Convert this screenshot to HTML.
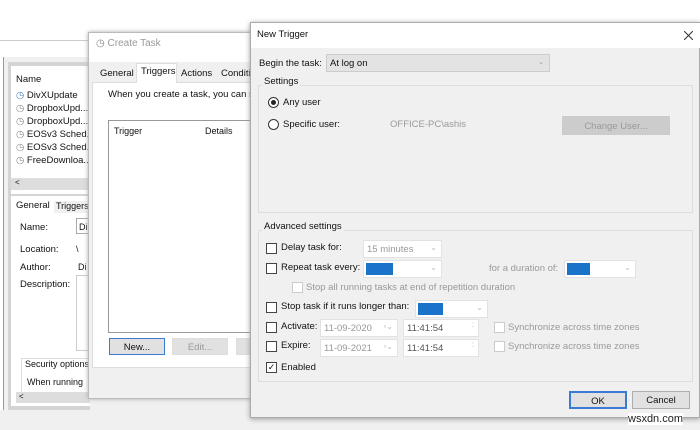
<!DOCTYPE html>
<html><head><meta charset="utf-8"><style>
*{box-sizing:border-box;margin:0;padding:0}
body{width:700px;height:430px;overflow:hidden;background:#f0f0f0;font-family:"Liberation Sans",sans-serif;font-size:9px;color:#111;position:relative}
.a{position:absolute;white-space:nowrap}
.cb{position:absolute;width:11px;height:11px;border:1px solid #444;background:#fff}
.cbd{position:absolute;width:11px;height:11px;border:1px solid #ccc;background:#fff}
.g{color:#999}
.combo{position:absolute;background:#fff;border:1px solid #e2e2e2}
.combo i{position:absolute;right:4px;top:2px;font-style:normal;color:#bbb;font-size:8px}
.blue{position:absolute;background:#1a73c8;top:2px;bottom:2px;left:2px}
.btn{position:absolute;background:#e1e1e1;border:1px solid #adadad;text-align:center;font-size:9.5px}
</style></head><body>
<div class="a" style="left:0;top:0;width:700px;height:41px;background:#fff;border-bottom:1px solid #ccc"></div>
<div class="a" style="left:0;top:41px;width:700px;height:16px;background:#fff"></div>
<div class="a" style="left:0;top:57px;width:4px;height:353px;border-right:1px solid #999;background:#fff"></div>
<div class="a" style="left:8px;top:62px;width:82px;height:348px;background:#d4d4d4"></div>
<div class="a" style="left:11px;top:66px;width:79px;height:128px;background:#fff"></div>
<div class="a" style="left:16px;top:74px;font-size:9.5px">Name</div>
<div class="a" style="left:16px;top:89px;line-height:13px;font-size:9.5px">
<div><span style="color:#4a7fc0">◷</span> DivXUpdate</div>
<div><span style="color:#888">◷</span> DropboxUpd...</div>
<div><span style="color:#888">◷</span> DropboxUpd...</div>
<div><span style="color:#888">◷</span> EOSv3 Sched...</div>
<div><span style="color:#888">◷</span> EOSv3 Sched...</div>
<div><span style="color:#888">◷</span> FreeDownloa...</div></div>
<div class="a" style="left:11px;top:178px;width:79px;height:12px;background:#ddd;font-size:8px;padding-left:4px">&lt;</div>
<div class="a" style="left:11px;top:196px;width:79px;height:210px;background:#fff"></div>
<div class="a" style="left:16px;top:200px;font-size:9.5px">General</div>
<div class="a" style="left:54px;top:201px;width:36px;height:12px;background:#f0f0f0;padding-left:2px">Triggers</div>
<div class="a" style="left:20px;top:222px;font-size:9.5px">Name:</div>
<div class="a" style="left:76px;top:218px;width:14px;height:16px;border:1px solid #aaa;padding:3px 2px">Di</div>
<div class="a" style="left:20px;top:244px;font-size:9.5px">Location:</div><div class="a" style="left:76px;top:244px">\</div>
<div class="a" style="left:20px;top:262px;font-size:9.5px">Author:</div><div class="a" style="left:78px;top:262px">Di</div>
<div class="a" style="left:20px;top:279px;font-size:9.5px">Description:</div>
<div class="a" style="left:76px;top:275px;width:14px;height:76px;border:1px solid #ccc"></div>
<div class="a" style="left:21px;top:358px;width:69px;height:36px;border:1px solid #ddd;border-right:none"></div>
<div class="a" style="left:25px;top:359px">Security options</div>
<div class="a" style="left:27px;top:377px">When running</div>
<div class="a" style="left:16px;top:392px;width:74px;height:11px;background:#ddd;font-size:8px;padding-left:3px">&lt;</div>
<div class="a" style="left:88px;top:32px;width:170px;height:367px;background:#f0f0f0;border:1px solid #bbb;box-shadow:0 0 4px #aaa"></div>
<div class="a" style="left:89px;top:33px;width:168px;height:29px;background:#fff"></div>
<div class="a" style="left:96px;top:38px;color:#999;font-size:10px"><span style="color:#888">◷</span> Create Task</div>
<div class="a" style="left:92px;top:82px;width:166px;height:286px;background:#fff;border:1px solid #ddd"></div>
<div class="a" style="left:136px;top:63px;width:41px;height:20px;background:#fff;border:1px solid #ddd;border-bottom:none"></div>
<div class="a" style="left:100px;top:68px;font-size:9.5px">General</div>
<div class="a" style="left:141px;top:66px;font-size:9.5px">Triggers</div>
<div class="a" style="left:181px;top:68px;font-size:9.5px">Actions</div>
<div class="a" style="left:221px;top:68px;font-size:9.5px">Conditi</div>
<div class="a" style="left:108px;top:89px;font-size:9.5px">When you create a task, you can sp</div>
<div class="a" style="left:108px;top:120px;width:150px;height:213px;border:1px solid #999;background:#fff"></div>
<div class="a" style="left:114px;top:126px">Trigger</div><div class="a" style="left:205px;top:126px">Details</div>
<div class="btn" style="left:109px;top:338px;width:56px;height:17px;border:1px solid #3a7bd5;padding-top:3px">New...</div>
<div class="btn" style="left:172px;top:338px;width:56px;height:17px;border-color:#ddd;color:#999;padding-top:3px">Edit...</div>
<div class="btn" style="left:236px;top:338px;width:20px;height:17px;border-color:#ddd"></div>
<div class="a" style="left:250px;top:22px;width:450px;height:396px;background:#f0f0f0;border:1px solid #aaa;box-shadow:0 1px 5px #999"></div>
<div class="a" style="left:251px;top:23px;width:449px;height:25px;background:#fff"></div>
<div class="a" style="left:257px;top:29px;font-size:9.5px">New Trigger</div>
<svg class="a" style="left:684px;top:31px" width="9" height="9"><path d="M0 0L9 9M9 0L0 9" stroke="#333" stroke-width="1"/></svg>
<div class="a" style="left:259px;top:58px;font-size:9.5px">Begin the task:</div>
<div class="a" style="left:326px;top:54px;width:224px;height:18px;background:#e3e3e3;border:1px solid #ccc;padding:3px 3px;font-size:9.5px">At log on<span style="position:absolute;right:5px;color:#999;font-size:7px">⌄</span></div>
<div class="a" style="left:258px;top:85px;width:435px;height:128px;border:1px solid #ddd"></div>
<div class="a" style="left:262px;top:76px;background:#f0f0f0;padding:0 2px;font-size:9.5px">Settings</div>
<div class="a" style="left:268px;top:97px;width:11px;height:11px;border:1px solid #333;border-radius:50%;background:#fff"><div style="position:absolute;left:2px;top:2px;width:5px;height:5px;border-radius:50%;background:#222"></div></div>
<div class="a" style="left:283px;top:97px;font-size:9.5px">Any user</div>
<div class="a" style="left:268px;top:119px;width:11px;height:11px;border:1px solid #333;border-radius:50%;background:#fff"></div>
<div class="a" style="left:283px;top:119px;font-size:9.5px">Specific user:</div>
<div class="a g" style="left:390px;top:119px;font-size:9.5px">OFFICE-PC\ashis</div>
<div class="btn g" style="left:562px;top:116px;width:108px;height:19px;background:#ccc;border-color:#ccc;color:#999;padding-top:4px">Change User...</div>
<div class="a" style="left:258px;top:230px;width:435px;height:152px;border:1px solid #ddd"></div>
<div class="a" style="left:262px;top:221px;background:#f0f0f0;padding:0 2px;font-size:9.5px">Advanced settings</div>
<div class="cb" style="left:266px;top:243px"></div><div class="a" style="left:281px;top:242px;font-size:9.5px">Delay task for:</div>
<div class="combo" style="left:363px;top:240px;width:79px;height:18px"><span class="g" style="position:absolute;left:3px;top:3px;font-size:9.5px">15 minutes</span><i>⌄</i></div>
<div class="cb" style="left:266px;top:263px"></div><div class="a" style="left:281px;top:262px;font-size:9.5px">Repeat task every:</div>
<div class="combo" style="left:363px;top:260px;width:79px;height:18px"><div class="blue" style="width:27px"></div><i>⌄</i></div>
<div class="a g" style="left:489px;top:263px;font-size:9.5px">for a duration of:</div>
<div class="combo" style="left:564px;top:260px;width:72px;height:18px"><div class="blue" style="width:23px"></div><i>⌄</i></div>
<div class="cbd" style="left:292px;top:282px"></div><div class="a g" style="left:306px;top:282px;font-size:9.5px">Stop all running tasks at end of repetition duration</div>
<div class="cb" style="left:266px;top:302px"></div><div class="a" style="left:281px;top:301px;font-size:9.5px">Stop task if it runs longer than:</div>
<div class="combo" style="left:415px;top:300px;width:73px;height:18px"><div class="blue" style="width:25px"></div><i>⌄</i></div>
<div class="cb" style="left:266px;top:322px"></div><div class="a" style="left:281px;top:321px;font-size:9.5px">Activate:</div>
<div class="combo" style="left:320px;top:319px;width:78px;height:18px"><span class="g" style="position:absolute;left:3px;top:3px;font-size:9.5px">11-09-2020</span><i>▫⌄</i></div>
<div class="combo" style="left:403px;top:319px;width:76px;height:18px"><span style="position:absolute;left:3px;top:3px;color:#555;font-size:9.5px">11:41:54</span><i style="top:0">:</i></div>
<div class="cbd" style="left:494px;top:322px"></div><div class="a g" style="left:508px;top:322px;font-size:9.5px">Synchronize across time zones</div>
<div class="cb" style="left:266px;top:341px"></div><div class="a" style="left:281px;top:340px;font-size:9.5px">Expire:</div>
<div class="combo" style="left:320px;top:339px;width:78px;height:18px"><span class="g" style="position:absolute;left:3px;top:3px;font-size:9.5px">11-09-2021</span><i>▫⌄</i></div>
<div class="combo" style="left:403px;top:339px;width:76px;height:18px"><span style="position:absolute;left:3px;top:3px;color:#555;font-size:9.5px">11:41:54</span><i style="top:0">:</i></div>
<div class="cbd" style="left:494px;top:341px"></div><div class="a g" style="left:508px;top:341px;font-size:9.5px">Synchronize across time zones</div>
<div class="cb" style="left:266px;top:362px;font-size:9px;line-height:9px;text-align:center">✓</div><div class="a" style="left:281px;top:362px;font-size:9.5px">Enabled</div>
<div class="btn" style="left:569px;top:391px;width:58px;height:18px;border:2px solid #3a7bd5;padding-top:3px">OK</div>
<div class="btn" style="left:632px;top:391px;width:58px;height:18px;padding-top:3px">Cancel</div>
<div class="a" style="left:628px;top:413px;font-size:11px;color:#222;background:#fff">wsxdn.com</div>
</body></html>
